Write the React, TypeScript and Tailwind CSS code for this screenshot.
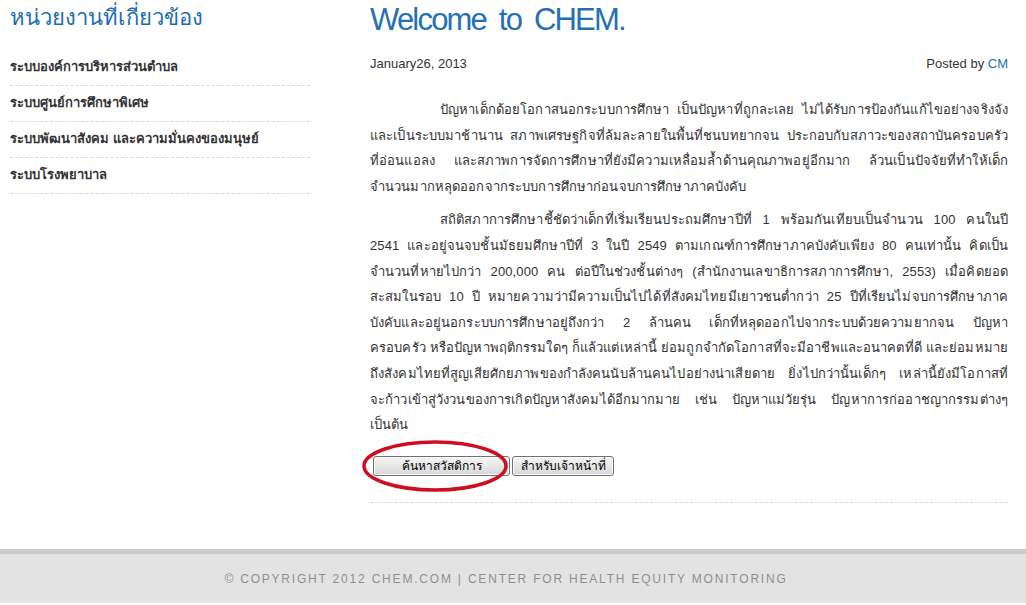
const sideLinks = [
  "ระบบองค์การบริหารส่วนตำบล",
  "ระบบศูนย์การศึกษาพิเศษ",
  "ระบบพัฒนาสังคม และความมั่นคงของมนุษย์",
  "ระบบโรงพยาบาล",
];

const para1 = [
  "ปัญหาเด็กด้อยโอกาสนอกระบบการศึกษา เป็นปัญหาที่ถูกละเลย ไม่ได้รับการป้องกันแก้ไขอย่างจริงจัง",
  "และเป็นระบบมาช้านาน สภาพเศรษฐกิจที่ล้มละลายในพื้นที่ชนบทยากจน ประกอบกับสภาวะของสถาบันครอบครัว",
  "ที่อ่อนแอลง และสภาพการจัดการศึกษาที่ยังมีความเหลื่อมล้ำด้านคุณภาพอยู่อีกมาก ล้วนเป็นปัจจัยที่ทำให้เด็ก",
  "จำนวนมากหลุดออกจากระบบการศึกษาก่อนจบการศึกษาภาคบังคับ",
];

const para2 = [
  "สถิติสภาการศึกษาชี้ชัดว่าเด็กที่เริ่มเรียนประถมศึกษาปีที่ 1 พร้อมกันเทียบเป็นจำนวน 100 คนในปี",
  "2541 และอยู่จนจบชั้นมัธยมศึกษาปีที่ 3 ในปี 2549 ตามเกณฑ์การศึกษาภาคบังคับเพียง 80 คนเท่านั้น คิดเป็น",
  "จำนวนที่หายไปกว่า 200,000 คน ต่อปีในช่วงชั้นต่างๆ (สำนักงานเลขาธิการสภาการศึกษา, 2553) เมื่อคิดยอด",
  "สะสมในรอบ 10 ปี หมายความว่ามีความเป็นไปได้ที่สังคมไทยมีเยาวชนต่ำกว่า 25 ปีที่เรียนไม่จบการศึกษาภาค",
  "บังคับและอยู่นอกระบบการศึกษาอยู่ถึงกว่า 2 ล้านคน เด็กที่หลุดออกไปจากระบบด้วยความยากจน ปัญหา",
  "ครอบครัว หรือปัญหาพฤติกรรมใดๆ ก็แล้วแต่เหล่านี้ ย่อมถูกจำกัดโอกาสที่จะมีอาชีพและอนาคตที่ดี และย่อมหมาย",
  "ถึงสังคมไทยที่สูญเสียศักยภาพของกำลังคนนับล้านคนไปอย่างน่าเสียดาย ยิ่งไปกว่านั้นเด็กๆ เหล่านี้ยังมีโอกาสที่",
  "จะก้าวเข้าสู่วังวนของการเกิดปัญหาสังคมได้อีกมากมาย เช่น ปัญหาแม่วัยรุ่น ปัญหาการก่ออาชญากรรมต่างๆ",
  "เป็นต้น",
];

// each line keeps the break of the original page; all but the last are stretched
const Paragraph = ({ lines }: { lines: string[] }) => (
  <div className="mb-[8px]">
    {lines.map((line, i) => (
      <div
        key={i}
        className={
          "whitespace-nowrap " +
          (i === 0 ? "pl-[70px] " : "") +
          (i < lines.length - 1 ? "text-justify [text-align-last:justify]" : "text-left")
        }
      >
        {line}
      </div>
    ))}
  </div>
);

const Button = ({ label, width }: { label: string; width: string }) => (
  <button
    className={`${width} h-[20px] rounded-[3px] border border-[#707070] bg-gradient-to-b from-[#f4f4f4] via-[#e8e8e8] to-[#d6d6d6] text-[12px] leading-[18px] text-black shadow-[inset_0_0_0_1px_#fcfcfc]`}
  >
    {label}
  </button>
);

export default function App() {
  return (
    <div className="w-[1026px] h-[605px] bg-white overflow-hidden font-['Liberation_Sans',Tahoma,sans-serif] text-[#333]">
      <div className="flex h-[549px]">
        <aside className="w-[300px] ml-[10px] shrink-0">
          <h2 className="text-[22px] leading-[28px] mt-[4px] text-[#1b6db3]">หน่วยงานที่เกี่ยวข้อง</h2>
          <ul className="mt-[18px]">
            {sideLinks.map((s) => (
              <li
                key={s}
                className="border-b border-dashed border-[#d8d8d8] pt-[6px] pb-[7px] text-[13px] leading-[22px] font-bold text-[#333]"
              >
                {s}
              </li>
            ))}
          </ul>
        </aside>

        <main className="ml-[60px] w-[638px]">
          <h1 className="text-[31px] leading-[40px] tracking-[-1.8px] [word-spacing:6px] text-[#2470b6]">
            Welcome to CHEM.
          </h1>
          <div className="flex justify-between text-[13px] leading-[20px] mt-[14px]">
            <span>January26, 2013</span>
            <span>
              Posted by <span className="text-[#2470b6]">CM</span>
            </span>
          </div>

          <div className="mt-[23px] text-[13px] leading-[25.6px] tracking-[0.12px] text-[#333]">
            <Paragraph lines={para1} />
            <Paragraph lines={para2} />
          </div>

          <div className="relative flex gap-[2px] ml-[3px] mt-[18px]">
            <Button label="ค้นหาสวัสดิการ" width="w-[137px]" />
            <Button label="สำหรับเจ้าหน้าที่" width="w-[102px]" />
            <svg
              className="absolute left-[-12px] top-[-20px] pointer-events-none"
              width="152"
              height="60"
              viewBox="0 0 152 60"
            >
              <ellipse cx="74" cy="30" rx="71" ry="24" fill="none" stroke="#cc1020" strokeWidth="3.5" />
            </svg>
          </div>

          <div className="mt-[26px] border-b border-dashed border-[#d8d8d8]" />
        </main>
      </div>

      <footer className="border-t-[5px] border-[#cccccc] bg-[#e3e3e3] h-[54px] flex items-center justify-center pr-[14px]">
        <span className="text-[12px] tracking-[1.8px] text-[#8f8f8f]">
          © COPYRIGHT 2012 CHEM.COM | CENTER FOR HEALTH EQUITY MONITORING
        </span>
      </footer>
    </div>
  );
}
